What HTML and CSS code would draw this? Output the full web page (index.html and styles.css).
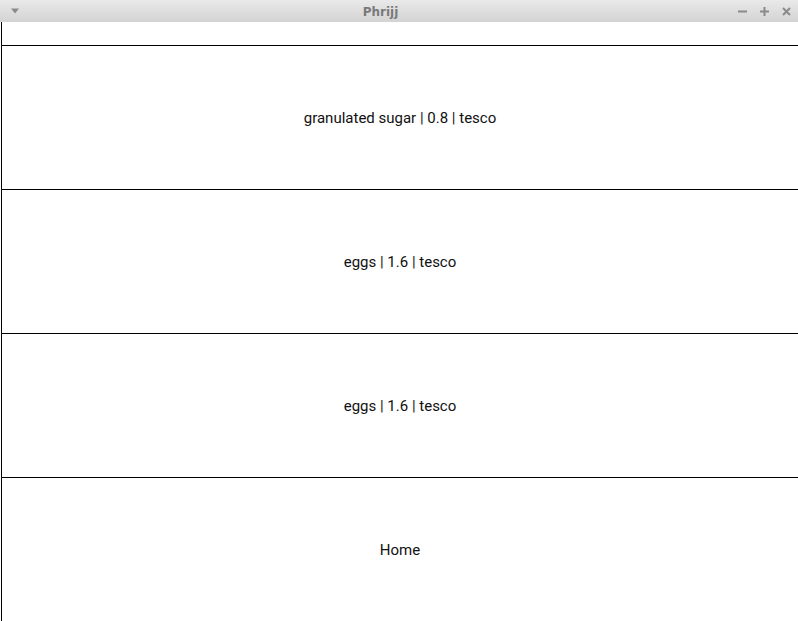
FILE: index.html
```html
<!DOCTYPE html>
<html>
<head>
<meta charset="utf-8">
<link rel="stylesheet" href="styles.css">
</head>
<body>
<div class="window">
  <div class="titlebar">
    <div class="tb-left">
      <svg width="10" height="6" viewBox="0 0 10 6"><path d="M1 0.5 L9 0.5 L5 5.5 Z" fill="#8a8a8a"/></svg>
    </div>
    <div class="title">Phrijj</div>
    <div class="tb-right">
      <svg width="11" height="11" viewBox="0 0 11 11"><rect x="1" y="4.5" width="9" height="2" fill="#8a8a8a"/></svg>
      <svg width="11" height="11" viewBox="0 0 11 11"><rect x="1" y="4.5" width="9" height="2" fill="#8a8a8a"/><rect x="4.5" y="1" width="2" height="9" fill="#8a8a8a"/></svg>
      <svg width="11" height="11" viewBox="0 0 11 11"><path d="M2 2 L9 9 M9 2 L2 9" stroke="#8a8a8a" stroke-width="2"/></svg>
    </div>
  </div>
  <div class="content">
    <div class="spacer"></div>
    <div class="row">granulated sugar | 0.8 | tesco</div>
    <div class="row">eggs | 1.6 | tesco</div>
    <div class="row">eggs | 1.6 | tesco</div>
    <div class="row">Home</div>
  </div>
</div>
</body>
</html>
```
FILE: styles.css
```css
html, body {
  margin: 0;
  padding: 0;
  background: #ffffff;
}
.window {
  width: 798px;
  height: 621px;
  display: flex;
  flex-direction: column;
  overflow: hidden;
}
.titlebar {
  height: 22px;
  flex: none;
  display: flex;
  align-items: center;
  background: linear-gradient(#e9e9e9, #d3d3d3);
}
.tb-left {
  width: 28px;
  display: flex;
  justify-content: center;
  padding-left: 2px;
  box-sizing: border-box;
}
.title {
  flex: 1;
  text-align: center;
  font-family: "DejaVu Sans", sans-serif;
  font-weight: bold;
  font-size: 12px;
  color: #7a7a7a;
  padding-right: 4px;
  padding-top: 1px;
}
.tb-right {
  display: flex;
  gap: 11px;
  padding-right: 6px;
}
.content {
  flex: 1;
  display: flex;
  flex-direction: column;
  margin-left: 1px;
  border-left: 1px solid #000;
}
.spacer {
  height: 23px;
  flex: none;
}
.row {
  height: 144px;
  flex: none;
  box-sizing: border-box;
  border-top: 1px solid #000;
  display: flex;
  align-items: center;
  justify-content: center;
  font-family: Roboto, sans-serif;
  font-size: 15px;
  color: #111;
}
```
